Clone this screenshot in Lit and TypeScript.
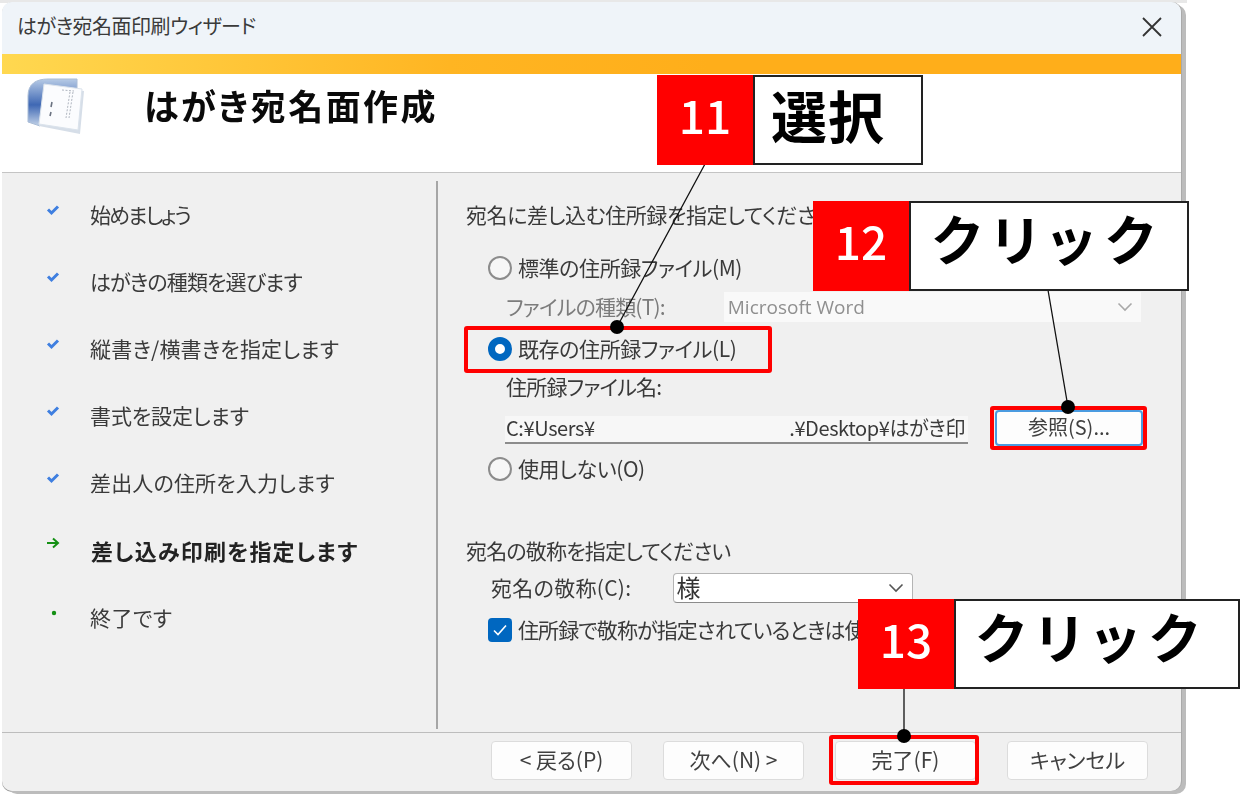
import { LitElement, html, css, svg } from "lit";
import { customElement } from "lit/decorators.js";

const NAV: [string, string, number][] = [
  ["始めましょう", "done", -1.9],
  ["はがきの種類を選びます", "done", -0.85],
  ["縦書き/横書きを指定します", "done", 0.2],
  ["書式を設定します", "done", -0.1],
  ["差出人の住所を入力します", "done", 0.17],
  ["差し込み印刷を指定します", "current", 1.2],
  ["終了です", "todo", 0.5],
];

const chevron = svg`<svg class="chev" width="16" height="10" viewBox="0 0 16 10"><path d="M1.5 1.5 8 8l6.5-6.5" fill="none" stroke="currentColor" stroke-width="1.6"/></svg>`;

@customElement("app-root")
export class AppRoot extends LitElement {
  static styles = css`
    :host {
      display: block;
      position: relative;
      width: 1240px;
      height: 795px;
      overflow: hidden;
      background: #fff;
      font-family: "Noto Sans CJK JP", "Noto Sans", sans-serif;
      font-feature-settings: "palt";
      color: #3a3a3a;
    }
    .desk {
      width: 1187px;
      height: 795px;
      padding: 2px 0 0 2px;
      box-sizing: border-box;
      background: linear-gradient(#e8e8e8, #e8e8e8 3px, #fff 3px);
    }
    .dialog {
      width: 1179px;
      height: 789px;
      box-sizing: border-box;
      display: flex;
      flex-direction: column;
      background: #f0f0f0;
      border-radius: 10px;
      box-shadow: 1px 0 0 #aaa, 5px 3px 0 #bcbcbc, 0 1px 0 #999;
      filter: blur(0.35px);
      overflow: hidden;
    }
    .title {
      height: 52px;
      flex: none;
      display: flex;
      align-items: center;
      justify-content: space-between;
      padding: 0 19px 6px 15px;
      background: #eff4f9;
      font-size: 20px;
      letter-spacing: -0.5px;
      box-sizing: border-box;
    }
    .close { display: block; color: #333; margin-top: 4px; }
    .band {
      height: 20px;
      flex: none;
      background: linear-gradient(90deg, #ffd850 0%, #ffb522 38%, #ffae1a 60%);
    }
    .head {
      height: 99px;
      flex: none;
      display: flex;
      align-items: flex-start;
      background: #fff;
      border-bottom: 1.5px solid #c4c4c4;
      box-sizing: border-box;
    }
    .logo { margin: 2px 0 0 24px; flex: none; filter: blur(0.5px); }
    .head h1 {
      margin: 6px 0 0 58px;
      font-size: 35px;
      line-height: 50px;
      font-weight: 700;
      letter-spacing: 2.4px;
      color: #0a0a0a;
    }
    .body { flex: 1; display: flex; min-height: 0; }
    .nav {
      width: 434px;
      flex: none;
      margin: 8px 0 3px;
      border-right: 2px solid #a6a6a6;
      box-sizing: content-box;
    }
    .step {
      height: 67.2px;
      display: flex;
      align-items: center;
      font-size: 21px;
      position: relative;
      top: -1px;
    }
    .step svg { flex: none; margin: -8px 0 0 44px; }
    .step span { margin-left: 30px; }
    .step.current svg { margin-top: -14px; }
    .step.current span { font-weight: 700; color: #222; font-size: 22px; margin-left: 31px; }
    .main {
      flex: 1;
      min-width: 0;
      padding: 25px 0 0 28px;
      display: flex;
      flex-direction: column;
      font-size: 21px;
      letter-spacing: -0.4px;
    }
    .line { height: 34px; padding-bottom: 2px; box-sizing: border-box; flex: none; display: flex; align-items: center; white-space: nowrap; }
    .mt3 { margin-top: 3px; }
    .mt4 { margin-top: 4px; }
    .mt5 { margin-top: 5px; }
    .mt6 { margin-top: 6px; }
    .mt8 { margin-top: 8px; }
    .mt19 { margin-top: 19px; }
    .mt48 { margin-top: 48px; }
    .radio {
      width: 24px;
      height: 24px;
      box-sizing: border-box;
      flex: none;
      margin: 2px 6px 0 22px;
      border: 2px solid #8c8c8c;
      border-radius: 50%;
      background: #f7f7f7;
    }
    .radio.on { border: 7px solid #0067c0; background: #fff; }
    .check {
      width: 24px;
      height: 24px;
      flex: none;
      margin: 2px 6px 0 22px;
      border-radius: 4px;
      background: #0067c0;
      display: flex;
      align-items: center;
      justify-content: center;
    }
    .clip { width: 340px; overflow: hidden; letter-spacing: -0.9px; }
    .sub { padding-left: 40px; }
    .narrow { letter-spacing: -0.8px; }
    .muted { color: #7c7c7c; }
    .field {
      height: 30px;
      flex: none;
      box-sizing: border-box;
      display: flex;
      align-items: center;
      justify-content: space-between;
    }
    .disabled-select {
      width: 417px;
      margin: 2px 0 0 59px;
      padding: 0 8px 0 4px;
      background: #f9f9f9;
      color: #8f8f8f;
      font-family: "Open Sans", sans-serif;
      font-size: 19px;
      letter-spacing: 0;
    }
    .chev { color: #a8a8a8; flex: none; }
    .file-row { height: 36px; flex: none; display: flex; align-items: center; padding-left: 39px; }
    .file {
      width: 463px;
      height: 28px;
      margin-top: 3px;
      padding: 0 3px 3px 1px;
      box-sizing: border-box;
      display: flex;
      align-items: center;
      justify-content: space-between;
      white-space: nowrap;
      background: #f7f7f7;
      border-bottom: 2px solid #8c8c8c;
      font-size: 20px;
      letter-spacing: -0.4px;
    }
    .btn {
      box-sizing: border-box;
      display: flex;
      align-items: center;
      justify-content: center;
      padding-bottom: 3px;
      background: #fdfdfd;
      border: 1.5px solid #dcdcdc;
      border-radius: 4px;
      font-size: 21px;
      letter-spacing: 0;
      color: #404040;
      white-space: nowrap;
    }
    .browse {
      width: 148px;
      height: 36px;
      margin-left: 27px;
      border: 2px solid #4a9be0;
      font-size: 20px;
    }
    .hon { padding-left: 25px; letter-spacing: 0.3px; }
    .hon-select {
      width: 240px;
      margin: 2px 0 0 42px;
      padding: 0 8px 3px 2px;
      background: #fff;
      border: 1.5px solid #b4b4b4;
      border-bottom-color: #8c8c8c;
      border-radius: 4px;
      color: #333;
      font-size: 24px;
    }
    .hon-select .chev { color: #555; margin-top: 3px; }
    .foot {
      height: 59px;
      flex: none;
      box-sizing: border-box;
      border-top: 1.5px solid #bdbdbd;
      display: flex;
      gap: 31px;
      padding: 8px 0 0 489px;
    }
    .foot .btn { width: 141px; height: 39px; }

    .overlay { position: absolute; inset: 0; pointer-events: none; }
    .callout { position: absolute; display: flex; height: 90px; box-sizing: border-box; }
    .num {
      width: 96px;
      padding-bottom: 12px;
      box-sizing: border-box;
      background: #ff0000;
      color: #fff;
      font-size: 46px;
      font-weight: 500;
      display: flex;
      align-items: center;
      justify-content: center;
      letter-spacing: 0;
      flex: none;
    }
    .txt {
      background: #fff;
      border: 2px solid #222;
      box-sizing: border-box;
      color: #000;
      font-size: 54px;
      font-weight: 700;
      display: flex;
      align-items: center;
      flex: none;
      white-space: nowrap;
      padding-bottom: 17px;
    }
    .c11 { left: 657px; top: 75px; }
    .c11 .txt { width: 170px; padding-left: 16px; padding-bottom: 14px; font-size: 56px; letter-spacing: 1px; font-feature-settings: normal; }
    .c12 { left: 813px; top: 201px; }
    .c12 .txt { width: 280px; padding-left: 21px; letter-spacing: 11px; }
    .c13 { left: 858px; top: 599px; }
    .c13 .txt { width: 286px; padding-left: 20px; letter-spacing: 11px; }
    .mark {
      position: absolute;
      box-sizing: border-box;
      border: 4px solid #ff0000;
      border-radius: 3px;
    }
    .m1 { left: 464px; top: 326px; width: 308px; height: 47px; }
    .m2 { left: 990px; top: 406px; width: 157px; height: 44px; }
    .m3 { left: 829px; top: 735px; width: 150px; height: 50px; }
    .leaders { position: absolute; left: 0; top: 0; }
  `;

  private stepIcon(kind: string) {
    if (kind === "done")
      return svg`<svg width="14" height="12" viewBox="0 0 14 12"><path d="M2 5.5 5.5 9 12 2.5" fill="none" stroke="#3f7fe0" stroke-width="3"/></svg>`;
    if (kind === "current")
      return svg`<svg width="14" height="12" viewBox="0 0 14 12"><path d="M1 6h11M7 1.5l5 4.5-5 4.5" fill="none" stroke="#149014" stroke-width="2"/></svg>`;
    return svg`<svg width="14" height="12" viewBox="0 0 14 12"><circle cx="8" cy="6" r="2.2" fill="#149014"/></svg>`;
  }

  render() {
    return html`
      <div class="desk">
        <div class="dialog">
          <div class="title">
            <span>はがき宛名面印刷ウィザード</span>
            <svg class="close" width="20" height="20" viewBox="0 0 20 20"><path d="M1 1l18 18M19 1 1 19" fill="none" stroke="currentColor" stroke-width="1.8"/></svg>
          </div>
          <div class="band"></div>
          <div class="head">
            <svg class="logo" width="60" height="60" viewBox="0 0 60 60">
              <defs>
                <linearGradient id="lg" x1="0" y1="0" x2="0" y2="1">
                  <stop offset="0" stop-color="#b7cbe6"/>
                  <stop offset="0.55" stop-color="#3f68b4"/>
                  <stop offset="1" stop-color="#c3d3e8"/>
                </linearGradient>
              </defs>
              <path d="M2 46V20C2 8 10 3 22 3h29v9L14 50z" fill="url(#lg)" stroke="#a9bcd6"/>
              <path d="M20 9 58 15 54 58 13 50z" fill="#d6dee8"/>
              <path d="M18 8 56 13 52 54 13 48z" fill="#fbfcfe" stroke="#dbe3ec"/>
              <path d="M44 16 40 42M47 16 43 42M36 14 48 15" stroke="#b0b6c0" stroke-width="1" stroke-dasharray="2 1.5" fill="none"/>
              <path d="M26 26 25 31M25 36 24 40" stroke="#6a7280" stroke-width="1.6" fill="none"/>
            </svg>
            <h1>はがき宛名面作成</h1>
          </div>
          <div class="body">
            <div class="nav">
              ${NAV.map(
                ([label, kind, spacing]) =>
                  html`<div class="step ${kind}">${this.stepIcon(kind)}<span style="letter-spacing:${spacing}px">${label}</span></div>`
              )}
            </div>
            <div class="main">
              <div class="line">宛名に差し込む住所録を指定してください</div>
              <div class="line mt19"><i class="radio"></i>標準の住所録ファイル(M)</div>
              <div class="line muted sub narrow mt5">
                ファイルの種類(T):
                <div class="field disabled-select"><span>Microsoft Word</span>${chevron}</div>
              </div>
              <div class="line mt8"><i class="radio on"></i>既存の住所録ファイル(L)</div>
              <div class="line sub narrow mt4">住所録ファイル名:</div>
              <div class="file-row mt6">
                <div class="file"><span>C:¥Users¥</span><span>.¥Desktop¥はがき印</span></div>
                <div class="btn browse">参照(S)...</div>
              </div>
              <div class="line mt6"><i class="radio"></i>使用しない(O)</div>
              <div class="line narrow mt48">宛名の敬称を指定してください</div>
              <div class="line hon mt3">
                宛名の敬称(C):
                <div class="field hon-select"><span>様</span>${chevron}</div>
              </div>
              <div class="line mt8">
                <i class="check"><svg width="16" height="14" viewBox="0 0 16 14"><path d="M2 7.5 6 11.5 14 2.5" fill="none" stroke="#fff" stroke-width="1.6"/></svg></i>
                <span class="clip">住所録で敬称が指定されているときは使用する</span>
              </div>
            </div>
          </div>
          <div class="foot">
            <div class="btn">&lt; 戻る(P)</div>
            <div class="btn">次へ(N) &gt;</div>
            <div class="btn">完了(F)</div>
            <div class="btn">キャンセル</div>
          </div>
        </div>
      </div>
      <div class="overlay">
        <div class="mark m1"></div>
        <div class="mark m2"></div>
        <div class="mark m3"></div>
        <svg class="leaders" width="1240" height="795" viewBox="0 0 1240 795">
          <g stroke="#111" stroke-width="1.3" fill="none">
            <path d="M705 164 617 327M1048 290 1068 407M904 689 904 736"/>
          </g>
          <circle cx="617" cy="327" r="7" fill="#000"/>
          <circle cx="1068" cy="407" r="7" fill="#000"/>
          <circle cx="904" cy="736" r="7" fill="#000"/>
        </svg>
        <div class="callout c11"><div class="num">11</div><div class="txt">選択</div></div>
        <div class="callout c12"><div class="num">12</div><div class="txt">クリック</div></div>
        <div class="callout c13"><div class="num">13</div><div class="txt">クリック</div></div>
      </div>
    `;
  }
}
